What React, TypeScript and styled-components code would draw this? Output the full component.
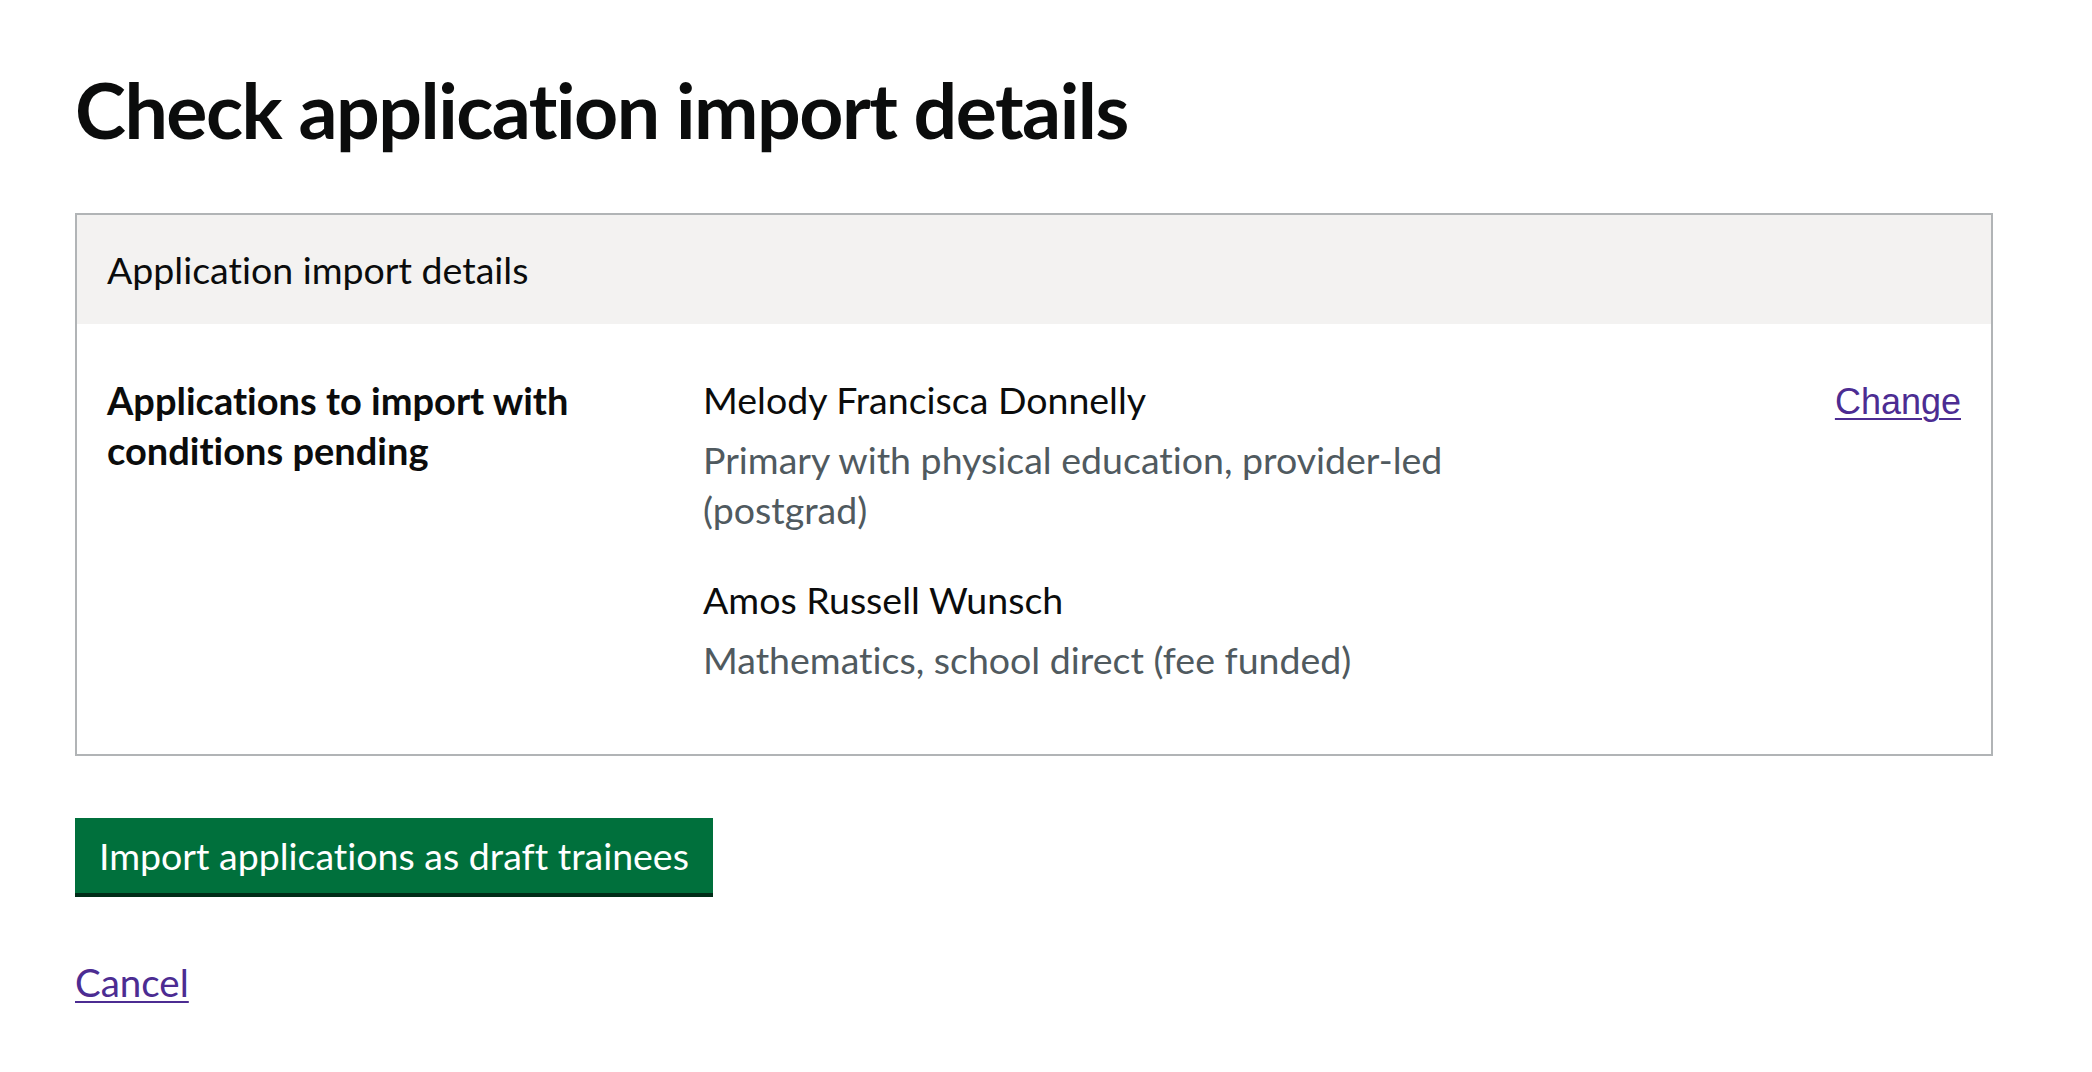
import React from "react";
import styled, { createGlobalStyle } from "styled-components";

const GlobalStyle = createGlobalStyle`
  body {
    margin: 0;
    background: #ffffff;
    color: #0b0c0c;
    font-family: "Lato", "Noto Sans", sans-serif;
    font-variant-ligatures: none;
  }
`;

const Page = styled.main`
  padding: 65px 99px 60px 75px;
`;

const Heading = styled.h1`
  margin: 0 0 60px;
  font-size: 77px;
  line-height: 88px;
  font-weight: 700;
  letter-spacing: -1.5px;
  color: #0b0c0c;
`;

const Card = styled.section`
  border: 2px solid #b1b4b6;
`;

const CardHeader = styled.div`
  height: 109px;
  display: flex;
  align-items: center;
  padding: 0 30px;
  background: #f3f2f1;
  font-size: 37.5px;
`;

const SummaryRow = styled.div`
  display: grid;
  grid-template-columns: 596px 770px 1fr;
  padding: 51px 30px 69px;
  font-size: 37.5px;
  line-height: 50px;
`;

const Key = styled.div`
  font-weight: 700;
  font-size: 38px;
  padding-right: 40px;
`;

const Value = styled.div`
  display: flex;
  flex-direction: column;
  gap: 40px;
`;

const Entry = styled.div`
  display: flex;
  flex-direction: column;
  gap: 10px;
`;

const Name = styled.span`
  color: #0b0c0c;
`;

const Course = styled.span`
  color: #505a5f;
`;

const Actions = styled.div`
  text-align: right;
`;

const Link = styled.a<{ $arial?: boolean }>`
  color: #4c2c92;
  text-decoration: underline;
  text-decoration-thickness: 2px;
  text-underline-offset: 4px;
  font-family: ${(p) =>
    p.$arial ? '"Liberation Sans", Arial, sans-serif' : '"Lato", sans-serif'};
  font-size: ${(p) => (p.$arial ? "36px" : "38.5px")};
  line-height: 50px;
`;

const Button = styled.button`
  margin-top: 62px;
  display: block;
  height: 75px;
  padding: 0 24px;
  border: 0;
  background: #00703c;
  box-shadow: 0 4px 0 #002d18;
  color: #ffffff;
  font-family: "Lato", "Noto Sans", sans-serif;
  font-variant-ligatures: none;
  font-size: 37.5px;
  line-height: 50px;
  cursor: pointer;
`;

const CancelWrap = styled.div`
  margin-top: 64px;
`;

const applications = [
  {
    name: "Melody Francisca Donnelly",
    course: "Primary with physical education, provider-led (postgrad)",
  },
  {
    name: "Amos Russell Wunsch",
    course: "Mathematics, school direct (fee funded)",
  },
];

const App = () => {
  return (
    <>
      <GlobalStyle />
      <Page>
        <Heading>Check application import details</Heading>
        <Card>
          <CardHeader>Application import details</CardHeader>
          <SummaryRow>
            <Key>Applications to import with conditions pending</Key>
            <Value>
              {applications.map(({ name, course }) => (
                <Entry key={name}>
                  <Name>{name}</Name>
                  <Course>{course}</Course>
                </Entry>
              ))}
            </Value>
            <Actions>
              <Link href="#" $arial>
                Change
              </Link>
            </Actions>
          </SummaryRow>
        </Card>
        <Button>Import applications as draft trainees</Button>
        <CancelWrap>
          <Link href="#">Cancel</Link>
        </CancelWrap>
      </Page>
    </>
  );
};

export default App;
